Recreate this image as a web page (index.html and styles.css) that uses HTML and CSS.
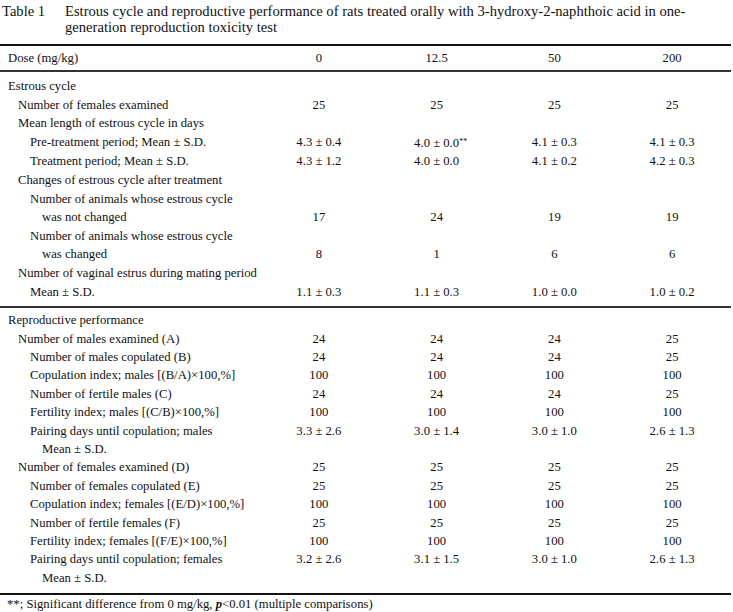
FILE: index.html
```html
<!DOCTYPE html>
<html>
<head>
<meta charset="utf-8">
<link rel="stylesheet" href="styles.css">
</head>
<body>
<div class="page">
  <div class="caption">
    <div class="cap-label">Table 1</div>
    <div class="cap-text">Estrous cycle and reproductive performance of rats treated orally with 3-hydroxy-2-naphthoic acid in one-<br>generation reproduction toxicity test</div>
  </div>
  <table class="data">
    <colgroup>
      <col class="c-label"><col class="c-val"><col class="c-val"><col class="c-val"><col class="c-val">
    </colgroup>
    <thead>
      <tr class="head"><th class="lab l0">Dose (mg/kg)</th><th>0</th><th>12.5</th><th>50</th><th>200</th></tr>
    </thead>
    <tbody class="sec sec1">
      <tr class="first"><td class="lab l0">Estrous cycle</td><td></td><td></td><td></td><td></td></tr>
      <tr><td class="lab l1">Number of females examined</td><td>25</td><td>25</td><td>25</td><td>25</td></tr>
      <tr><td class="lab l1">Mean length of estrous cycle in days</td><td></td><td></td><td></td><td></td></tr>
      <tr><td class="lab l2">Pre-treatment period; Mean ± S.D.</td><td>4.3 ± 0.4</td><td>4.0 ± 0.0<span class="sig">**</span></td><td>4.1 ± 0.3</td><td>4.1 ± 0.3</td></tr>
      <tr><td class="lab l2">Treatment period; Mean ± S.D.</td><td>4.3 ± 1.2</td><td>4.0 ± 0.0</td><td>4.1 ± 0.2</td><td>4.2 ± 0.3</td></tr>
      <tr><td class="lab l1">Changes of estrous cycle after treatment</td><td></td><td></td><td></td><td></td></tr>
      <tr><td class="lab l2">Number of animals whose estrous cycle</td><td></td><td></td><td></td><td></td></tr>
      <tr><td class="lab l3">was not changed</td><td>17</td><td>24</td><td>19</td><td>19</td></tr>
      <tr><td class="lab l2">Number of animals whose estrous cycle</td><td></td><td></td><td></td><td></td></tr>
      <tr><td class="lab l3">was changed</td><td>8</td><td>1</td><td>6</td><td>6</td></tr>
      <tr><td class="lab l1">Number of vaginal estrus during mating period</td><td></td><td></td><td></td><td></td></tr>
      <tr class="last"><td class="lab l2">Mean ± S.D.</td><td>1.1 ± 0.3</td><td>1.1 ± 0.3</td><td>1.0 ± 0.0</td><td>1.0 ± 0.2</td></tr>
    </tbody>
    <tbody class="sec sec2">
      <tr class="first"><td class="lab l0">Reproductive performance</td><td></td><td></td><td></td><td></td></tr>
      <tr><td class="lab l1">Number of males examined (A)</td><td>24</td><td>24</td><td>24</td><td>25</td></tr>
      <tr><td class="lab l2">Number of males copulated (B)</td><td>24</td><td>24</td><td>24</td><td>25</td></tr>
      <tr><td class="lab l2">Copulation index; males [(B/A)×100,%]</td><td>100</td><td>100</td><td>100</td><td>100</td></tr>
      <tr><td class="lab l2">Number of fertile males (C)</td><td>24</td><td>24</td><td>24</td><td>25</td></tr>
      <tr><td class="lab l2">Fertility index; males [(C/B)×100,%]</td><td>100</td><td>100</td><td>100</td><td>100</td></tr>
      <tr><td class="lab l2">Pairing days until copulation; males</td><td>3.3 ± 2.6</td><td>3.0 ± 1.4</td><td>3.0 ± 1.0</td><td>2.6 ± 1.3</td></tr>
      <tr><td class="lab l3">Mean ± S.D.</td><td></td><td></td><td></td><td></td></tr>
      <tr><td class="lab l1">Number of females examined (D)</td><td>25</td><td>25</td><td>25</td><td>25</td></tr>
      <tr><td class="lab l2">Number of females copulated (E)</td><td>25</td><td>25</td><td>25</td><td>25</td></tr>
      <tr><td class="lab l2">Copulation index; females [(E/D)×100,%]</td><td>100</td><td>100</td><td>100</td><td>100</td></tr>
      <tr><td class="lab l2">Number of fertile females (F)</td><td>25</td><td>25</td><td>25</td><td>25</td></tr>
      <tr><td class="lab l2">Fertility index; females [(F/E)×100,%]</td><td>100</td><td>100</td><td>100</td><td>100</td></tr>
      <tr><td class="lab l2">Pairing days until copulation; females</td><td>3.2 ± 2.6</td><td>3.1 ± 1.5</td><td>3.0 ± 1.0</td><td>2.6 ± 1.3</td></tr>
      <tr class="last"><td class="lab l3">Mean ± S.D.</td><td></td><td></td><td></td><td></td></tr>
    </tbody>
  </table>
  <div class="footnote">**; Significant difference from 0 mg/kg, <b><i>p</i></b>&lt;0.01 (multiple comparisons)</div>
</div>
</body>
</html>
```

FILE: styles.css
```css
html, body {
  margin: 0;
  padding: 0;
  background: #fff;
}
body {
  font-family: "Liberation Serif", "DejaVu Serif", serif;
  color: #111;
}
.page {
  width: 733px;
}
.caption {
  display: flex;
  padding: 3px 0 0 2px;
  font-size: 14.6px;
  line-height: 16px;
  height: 44px;
  box-sizing: border-box;
  white-space: nowrap;
}
.cap-label {
  width: 63px;
  flex: none;
}
.cap-text {
  flex: 1;
}
.data {
  width: 731px;
  border-collapse: collapse;
  table-layout: fixed;
  font-size: 12.7px;
  border-top: 2px solid #111;
  border-bottom: 2px solid #111;
}
.c-label { width: 260px; }
.c-val { width: 117.75px; }
.data th, .data td {
  padding: 0;
  text-align: center;
  font-weight: normal;
  white-space: nowrap;
}
.head th {
  height: 24px;
  line-height: 24px;
  border-bottom: 2px solid #333;
}
.data td {
  height: 18.6px;
  line-height: 18.6px;
}
.sec2 td {
  height: 18.4px;
  line-height: 18.4px;
}
.data .lab {
  text-align: left;
}
.data .l0 { padding-left: 8px; }
.data .l1 { padding-left: 18px; }
.data .l2 { padding-left: 30px; }
.data .l3 { padding-left: 42px; }
.sec1 tr.first td { padding-top: 5px; }
.sec1 tr.last td { padding-bottom: 5px; }
.sec1 { border-bottom: 2px solid #333; }
.sec2 tr.first td { padding-top: 3px; }
.sec2 tr.last td { padding-bottom: 6px; }
.sig {
  font-size: 8px;
  vertical-align: 3px;
  margin-right: -8px;
}
.footnote {
  padding-left: 7px;
  font-size: 12.7px;
  line-height: 18px;
}
```
